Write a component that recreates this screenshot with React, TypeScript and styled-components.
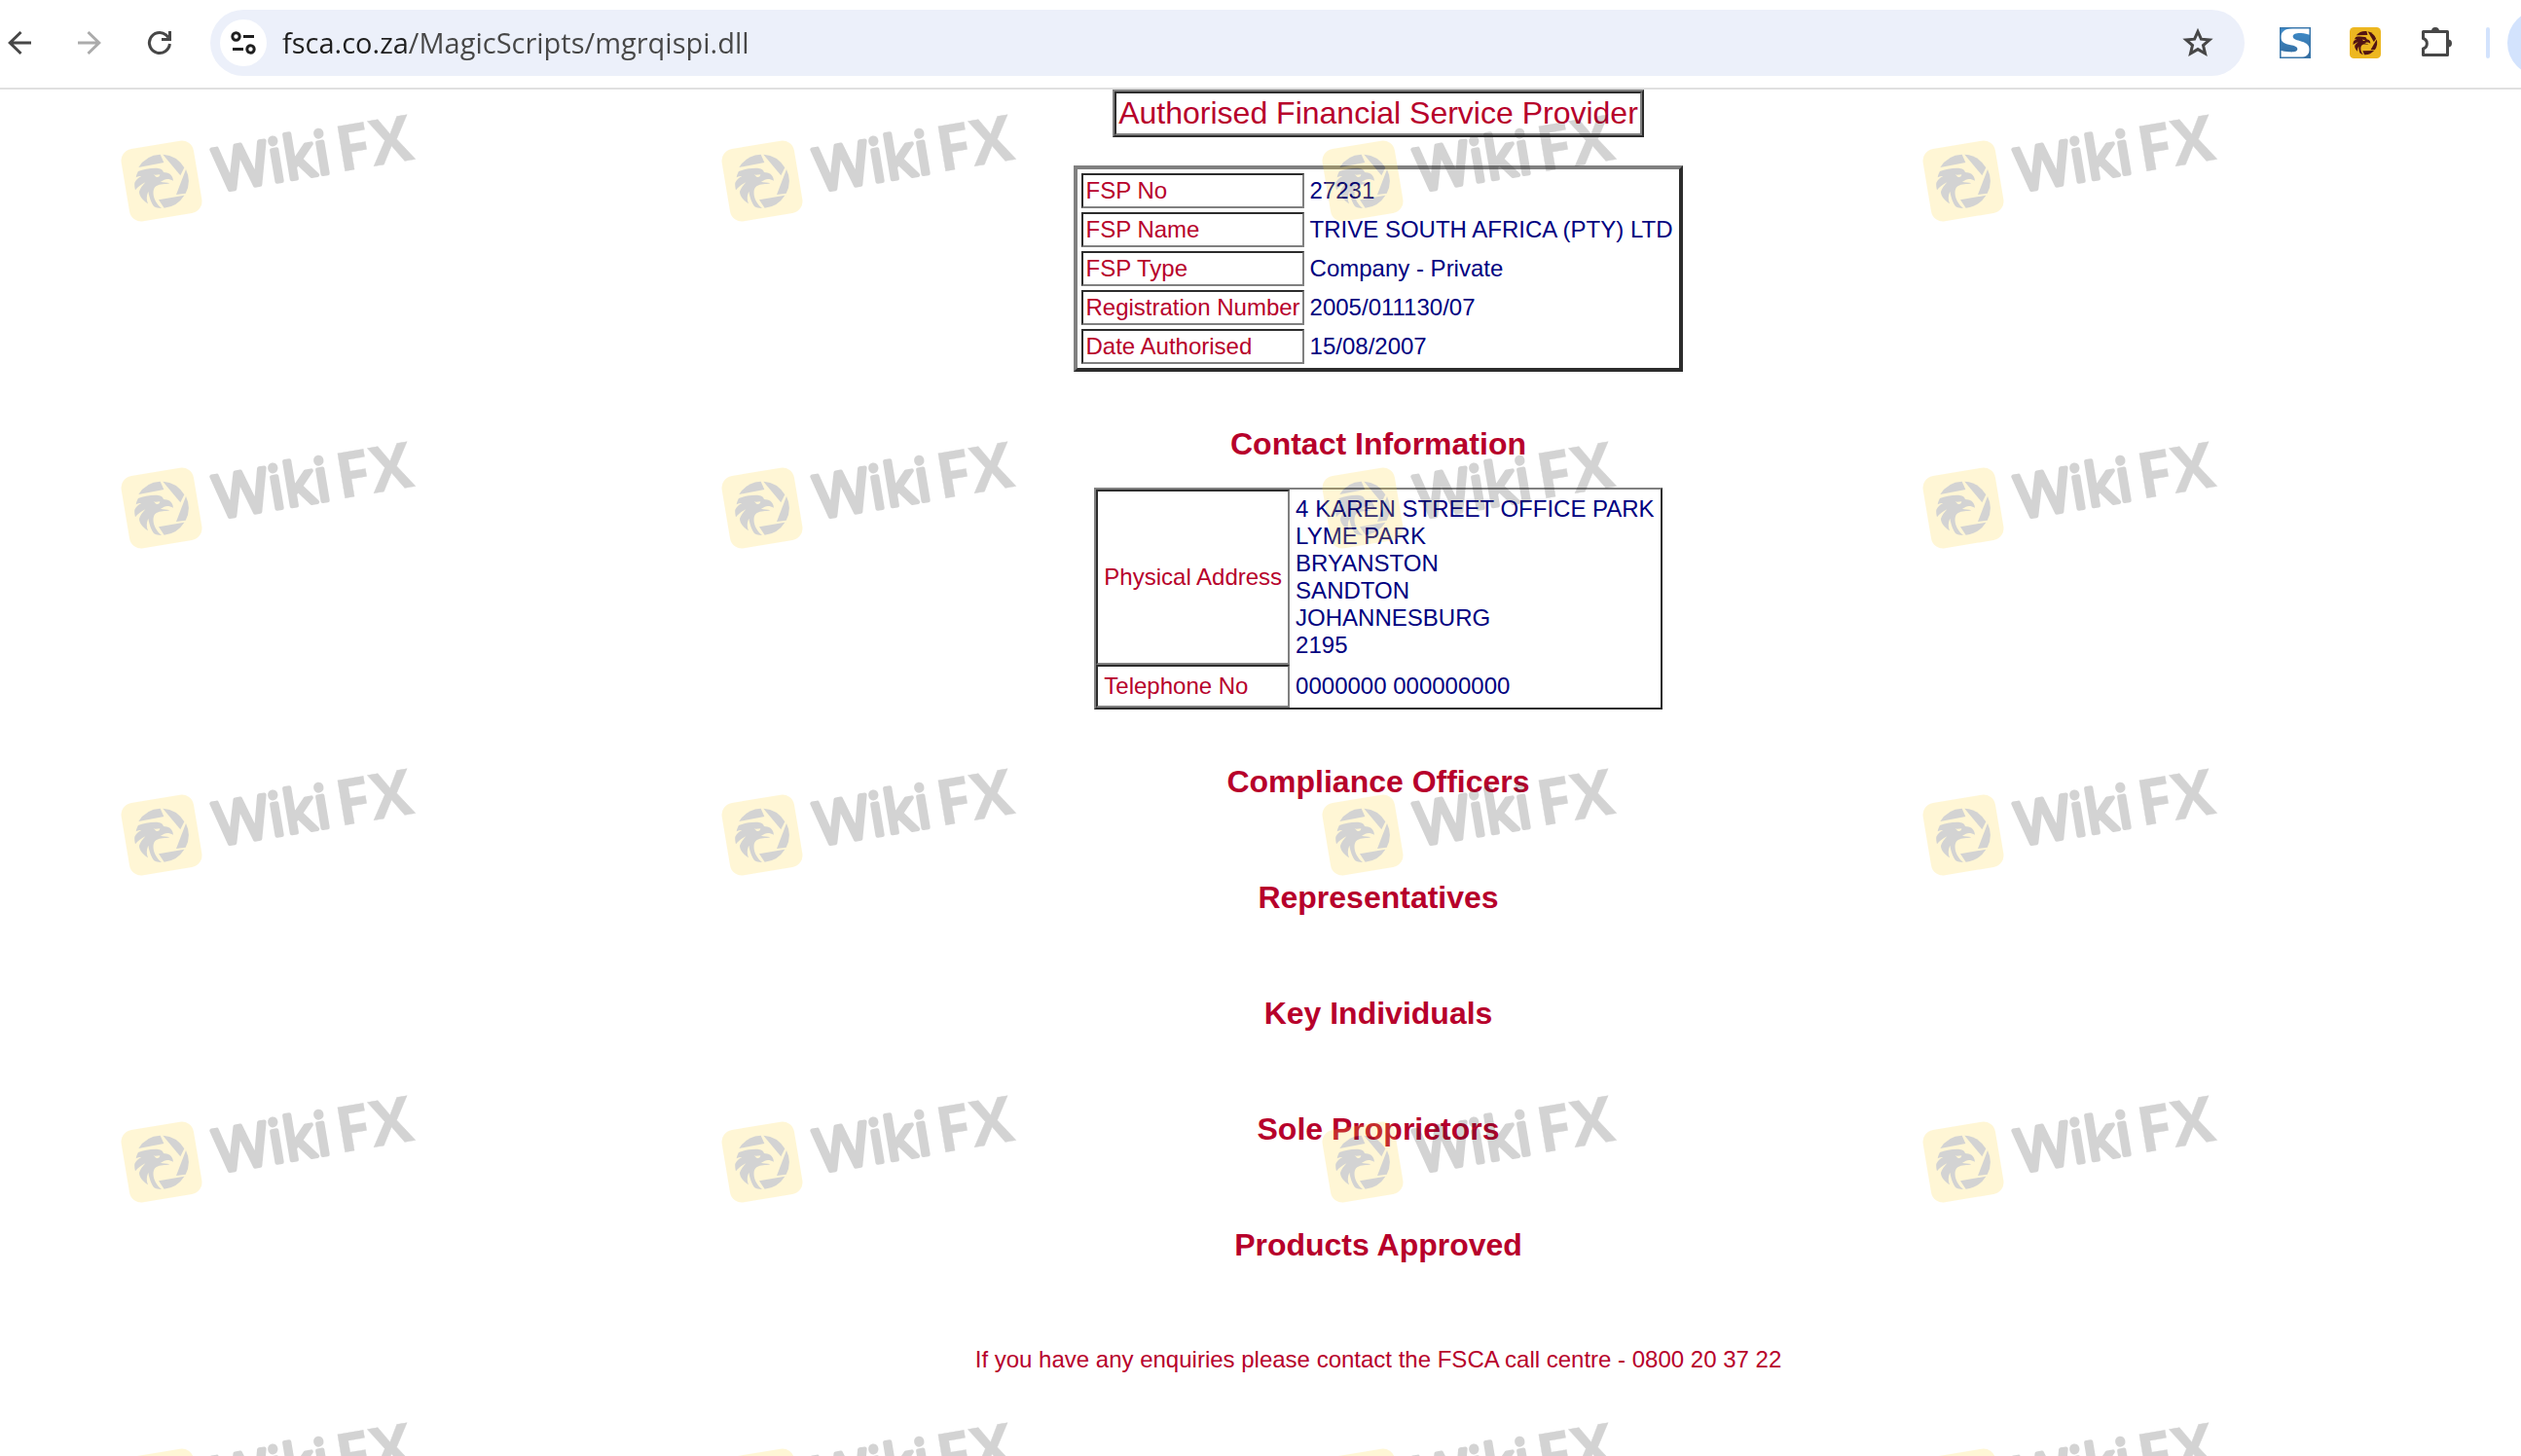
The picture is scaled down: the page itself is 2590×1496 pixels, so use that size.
import React from "react";
import styled, { createGlobalStyle } from "styled-components";

const GlobalStyle = createGlobalStyle`
  * { box-sizing: border-box; }
  body { margin: 0; background: #ffffff; }
`;

const LIGHT = "#808080";
const DARK = "#2c2c2c";
const RED = "#b7002b";
const NAVY = "#000080";

const Page = styled.div`
  position: relative;
  min-height: 100vh;
  overflow: hidden;
  font-family: "Liberation Sans", Arial, sans-serif;
  font-size: 24px;
  line-height: 28px;
`;

const Toolbar = styled.header`
  display: flex;
  align-items: center;
  padding: 10px 0 12px 4px;
  border-bottom: 2px solid #e0e0e0;
`;

const NavGroup = styled.nav`
  display: flex;
  gap: 40px;
  margin-right: 36px;
`;

const IconButton = styled.button<{ $size?: number; $color?: string }>`
  display: flex;
  flex: none;
  align-items: center;
  justify-content: center;
  width: ${(p) => p.$size ?? 32}px;
  height: ${(p) => p.$size ?? 32}px;
  padding: 0;
  border: 0;
  background: none;
  color: ${(p) => p.$color ?? "#474747"};
`;

const AddressBar = styled.form`
  display: flex;
  flex: 1;
  align-items: center;
  min-width: 0;
  height: 68px;
  padding: 0 32px 0 10px;
  border-radius: 34px;
  background: #ecf0fa;
`;

const SiteButton = styled(IconButton)`
  border-radius: 50%;
  background: #ffffff;
`;

const AddressInput = styled.input`
  flex: 1;
  min-width: 0;
  height: 48px;
  margin: 0 16px;
  padding: 0 0 2px;
  border: 0;
  outline: 0;
  font-family: "Open Sans", "Noto Sans", sans-serif;
  font-size: 29px;
  line-height: 40px;
  color: #474747;
  background: linear-gradient(to right, #1f1f1f 131px, #474747 131px);
  background-clip: text;
  -webkit-background-clip: text;
  -webkit-text-fill-color: transparent;
`;

const Extensions = styled.div`
  display: flex;
  align-items: center;
  gap: 40px;
  margin: 0 32px 0 36px;
`;

const Divider = styled.span`
  width: 4px;
  height: 32px;
  margin-right: 18px;
  border-radius: 2px;
  background: #d3e3fd;
`;

const ProfileSlot = styled.div`
  width: 14px;
  height: 68px;
  overflow: hidden;
`;

const ProfileButton = styled.button`
  width: 68px;
  height: 68px;
  padding: 0;
  border: 0;
  border-radius: 50%;
  background: #d3e3fd;
`;

const Content = styled.main`
  display: flex;
  flex-direction: column;
  align-items: center;
  padding-left: 242px;
  padding-bottom: 80px;
`;

const TitleFrame = styled.div`
  border: 2px solid;
  border-color: ${LIGHT} ${DARK} ${DARK} ${LIGHT};
`;

const Title = styled.h1`
  margin: 0;
  padding: 2px;
  border: 2px solid;
  border-color: ${DARK} ${LIGHT} ${LIGHT} ${DARK};
  font-size: 32px;
  font-weight: 400;
  line-height: 37px;
  white-space: nowrap;
  color: ${RED};
`;

const DataTable = styled.table<{ $frame: number; $spacing: number; $pad: number }>`
  border: ${(p) => p.$frame}px solid;
  border-color: ${LIGHT} ${DARK} ${DARK} ${LIGHT};
  border-collapse: separate;
  border-spacing: ${(p) => p.$spacing}px;
  white-space: nowrap;

  th,
  td {
    padding: ${(p) => p.$pad}px;
  }
`;

const DetailsTable = styled(DataTable)`
  margin-top: 29px;
`;

const ContactTable = styled(DataTable)`
  margin-top: 26px;
`;

const Label = styled.th`
  border: 2px solid;
  border-color: ${DARK} ${LIGHT} ${LIGHT} ${DARK};
  font-weight: 400;
  text-align: left;
  color: ${RED};
`;

const Value = styled.td`
  color: ${NAVY};
`;

const Line = styled.div``;

const Heading = styled.h2`
  margin: 56px 0 0;
  font-size: 32px;
  font-weight: 700;
  line-height: 37px;
  color: ${RED};
`;

const EmptySections = styled.section`
  display: flex;
  flex-direction: column;
  align-items: center;
  gap: 82px;
  margin-top: 56px;

  ${Heading} {
    margin: 0;
  }
`;

const Enquiries = styled.p`
  margin: 85px 0 0;
  color: ${RED};
`;

const WatermarkLayer = styled.div`
  position: absolute;
  inset: 0;
  display: grid;
  grid-template-columns: repeat(auto-fill, 617px);
  grid-auto-rows: 336px;
  padding: 100px 0 0 110px;
  overflow: hidden;
  opacity: 0.2;
  pointer-events: none;
`;

const Mark = styled.svg`
  width: 340px;
  height: 140px;
  overflow: visible;
`;

function Eagle({ color, ground }: { color: string; ground: string }) {
  return (
    <g fill={color}>
      <path d="M67 96 A83 83 0 0 1 134 56 L145 81 Z" />
      <path d="M142 56 A83 83 0 0 1 208 97 L196 121 Z" />
      <path d="M213 102 A83 83 0 0 1 212 176 L183 180 Z" />
      <path d="M129 196 L208 182 A83 83 0 0 1 146 221 Z" />
      <path d="M59 127 C61 117 64 112 66 108 C82 102 108 97 128 99 C137 100 142 105 144 111 C158 112 172 116 174 137 C164 132 154 131 146 134 C140 137 138 139 134 140 C144 142 154 142 163 145 C148 149 134 146 121 154 C108 163 112 187 120 201 C125 210 131 217 138 222 C128 222 121 220 115 217 C107 206 101 192 97 170 C91 183 91 196 96 208 C80 198 69 184 69 171 C72 161 79 152 88 142 C75 148 64 157 57 166 C55 157 54 148 55 143 C60 134 66 128 76 123 C69 123 63 124 59 127 Z" />
      <path d="M113 118 C119 121 126 118 133 118 C133 123 128 127 123 126 C118 125 118 121 113 118 Z" fill={ground} />
    </g>
  );
}

function Watermark() {
  return (
    <Mark viewBox="0 0 1020 420" aria-hidden="true">
      <rect x="55" y="145" width="226" height="226" rx="37" fill="#ffd433" transform="rotate(-9.5 168 258)" />
      <g transform="translate(30 120)">
        <Eagle color="#282828" ground="#ffd433" />
      </g>
      <g transform="translate(328 297) rotate(-9.5)" fill="#282828" stroke="#282828">
        <text
          x="14"
          y="-4"
          fontFamily="'Open Sans', 'Noto Sans', sans-serif"
          fontSize="184"
          strokeWidth="13"
          strokeLinejoin="round"
          strokeLinecap="round"
        >
          Wiki
        </text>
        <text
          x="394"
          y="-2"
          fontFamily="'Open Sans', 'Noto Sans', sans-serif"
          fontWeight="700"
          fontSize="196"
          strokeWidth="1"
        >
          FX
        </text>
      </g>
    </Mark>
  );
}

const details: [string, string][] = [
  ["FSP No", "27231"],
  ["FSP Name", "TRIVE SOUTH AFRICA (PTY) LTD"],
  ["FSP Type", "Company - Private"],
  ["Registration Number", "2005/011130/07"],
  ["Date Authorised", "15/08/2007"],
];

const contact: [string, string[]][] = [
  ["Physical Address", ["4 KAREN STREET OFFICE PARK", "LYME PARK", "BRYANSTON", "SANDTON", "JOHANNESBURG", "2195"]],
  ["Telephone No", ["0000000 000000000"]],
];

const emptySections = ["Compliance Officers", "Representatives", "Key Individuals", "Sole Proprietors", "Products Approved"];

export default function App() {
  return (
    <Page>
      <GlobalStyle />
      <Toolbar>
        <NavGroup aria-label="History">
          <IconButton aria-label="Back">
            <svg width="32" height="32" viewBox="0 0 32 32" fill="none" stroke="currentColor" strokeWidth="3">
              <path d="M28 16 H6 M17.500 5 L6.200 16 L17.500 27" />
            </svg>
          </IconButton>
          <IconButton aria-label="Forward" $color="#ababab">
            <svg width="32" height="32" viewBox="0 0 32 32" fill="none" stroke="currentColor" strokeWidth="3">
              <path d="M4 16 H26 M14.500 5 L25.800 16 L14.500 27" />
            </svg>
          </IconButton>
          <IconButton aria-label="Reload">
            <svg width="32" height="32" viewBox="0 0 32 32" fill="none" stroke="currentColor" strokeWidth="3">
              <path d="M26.400 17 A10.500 10.500 0 1 1 22.500 7.800 L25 10.500" />
              <path d="M26.500 4 V12.500 H18" />
            </svg>
          </IconButton>
        </NavGroup>

        <AddressBar onSubmit={(e) => e.preventDefault()}>
          <SiteButton type="button" $size={48} $color="#1f1f1f" aria-label="View site information">
            <svg width="28" height="28" viewBox="0 0 28 28" fill="none" stroke="currentColor" strokeWidth="3">
              <circle cx="6.500" cy="7.500" r="3.700" />
              <path d="M14 7.500 H25 M3 20.500 H14" />
              <circle cx="21.500" cy="20.500" r="3.700" />
            </svg>
          </SiteButton>
          <AddressInput aria-label="Address" type="text" spellCheck={false} defaultValue="fsca.co.za/MagicScripts/mgrqispi.dll" />
          <IconButton type="button" aria-label="Bookmark this page">
            <svg width="32" height="32" viewBox="0 0 32 32" fill="none" stroke="currentColor" strokeWidth="3">
              <path d="M16 4.500 L19.400 12.200 L28 13 L21.500 18.600 L23.500 27 L16 22.600 L8.500 27 L10.500 18.600 L4 13 L12.600 12.200 Z" />
            </svg>
          </IconButton>
        </AddressBar>

        <Extensions>
          <IconButton aria-label="S extension">
            <svg width="32" height="32" viewBox="0 0 96 96">
              <defs>
                <linearGradient id="blue" x1="0" y1="0" x2="0" y2="1">
                  <stop offset="0" stopColor="#3f8fce" />
                  <stop offset="1" stopColor="#33699b" />
                </linearGradient>
              </defs>
              <rect width="96" height="96" fill="url(#blue)" />
              <path
                fill="#ffffff"
                d="M92 4 H40 C14 4 4 16 4 31 C4 46 16 52 34 55 C46 57 55 60 55 67 C55 75 44 77 30 76 C18 75 8 73 4 72 V92 H70 C86 90 92 80 92 68 C92 53 80 47 62 42 C50 39 41 36 41 28 C41 20 54 17 66 18 C78 19 86 21 92 23 Z"
              />
              <rect x="2" y="2" width="92" height="92" fill="none" stroke="#3a77ab" strokeWidth="4" />
            </svg>
          </IconButton>
          <IconButton aria-label="WikiFX extension">
            <svg width="32" height="32" viewBox="0 0 96 96">
              <rect width="96" height="96" rx="13" fill="#edb720" />
              <g transform="translate(48 48) rotate(9.500) scale(0.440) translate(-138 -138)">
                <Eagle color="#511413" ground="#edb720" />
              </g>
            </svg>
          </IconButton>
          <IconButton $size={36} aria-label="Extensions">
            <svg width="36" height="36" viewBox="0 0 36 36">
              <path
                fill="none"
                stroke="currentColor"
                strokeWidth="3"
                strokeLinejoin="round"
                d="M3.500 6.500 H28.500 V30.500 H3.500 V24 A5.500 5.500 0 0 0 3.500 13.500 Z"
              />
              <path fill="currentColor" d="M12 6 A4 4 0 0 1 20 6 Z M29 14.500 A4 4 0 0 1 29 22.500 Z" />
            </svg>
          </IconButton>
        </Extensions>
        <Divider />
        <ProfileSlot>
          <ProfileButton aria-label="Profile" />
        </ProfileSlot>
      </Toolbar>

      <Content>
        <TitleFrame>
          <Title>Authorised Financial Service Provider</Title>
        </TitleFrame>

        <DetailsTable $frame={4} $spacing={4} $pad={2}>
          <tbody>
            {details.map(([label, value]) => (
              <tr key={label}>
                <Label scope="row">{label}</Label>
                <Value>{value}</Value>
              </tr>
            ))}
          </tbody>
        </DetailsTable>

        <Heading>Contact Information</Heading>
        <ContactTable $frame={2} $spacing={0} $pad={6}>
          <tbody>
            {contact.map(([label, lines]) => (
              <tr key={label}>
                <Label scope="row">{label}</Label>
                <Value>
                  {lines.map((line) => (
                    <Line key={line}>{line}</Line>
                  ))}
                </Value>
              </tr>
            ))}
          </tbody>
        </ContactTable>

        <EmptySections>
          {emptySections.map((name) => (
            <Heading key={name}>{name}</Heading>
          ))}
        </EmptySections>

        <Enquiries>If you have any enquiries please contact the FSCA call centre - 0800 20 37 22</Enquiries>
      </Content>

      <WatermarkLayer>
        {Array.from({ length: 20 }, (_, i) => (
          <Watermark key={i} />
        ))}
      </WatermarkLayer>
    </Page>
  );
}
